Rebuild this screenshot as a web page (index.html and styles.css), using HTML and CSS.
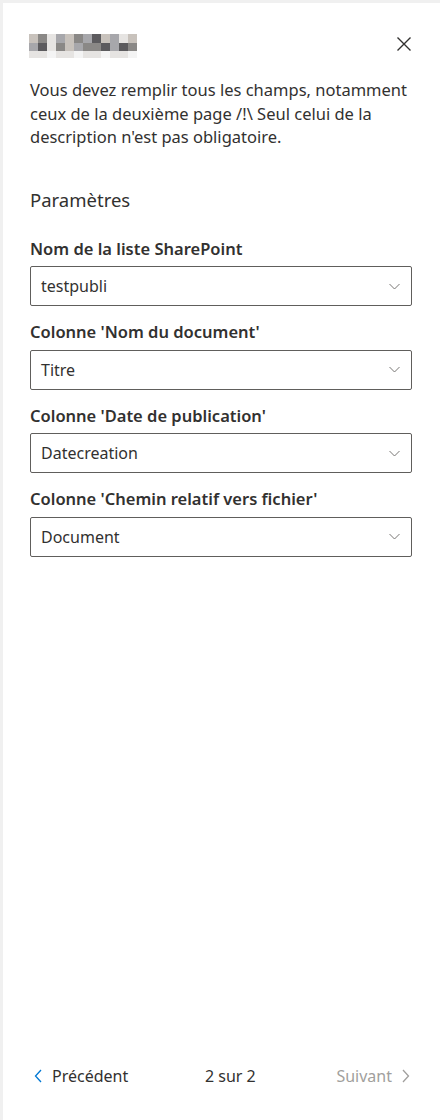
FILE: index.html
```html
<!DOCTYPE html>
<html lang="fr">
<head>
<meta charset="utf-8">
<link rel="stylesheet" href="styles.css">
</head>
<body>
<div class="panel">
  <div class="header">
    <div class="mosaic">
      <span class="c2"></span><span class="c4"></span><span class="c1"></span><span class="c3"></span><span class="c2"></span><span class="c4"></span><span class="c3"></span><span class="c5"></span><span class="c2"></span><span class="c3"></span><span class="c1"></span><span class="c2"></span>
      <span class="c3"></span><span class="c5"></span><span class="c1"></span><span class="c4"></span><span class="c2"></span><span class="c3"></span><span class="c4"></span><span class="c4"></span><span class="c5"></span><span class="c3"></span><span class="c5"></span><span class="c4"></span>
      <span class="c1"></span><span class="c1"></span><span class="c0"></span><span class="c1"></span><span class="c1"></span><span class="c0"></span><span class="c1"></span><span class="c1"></span><span class="c0"></span><span class="c1"></span><span class="c1"></span><span class="c0"></span>
    </div>
    <button class="close" aria-label="Fermer">
      <svg width="16" height="16" viewBox="0 0 16 16"><path d="M1.5 1.5 L14.5 14.5 M14.5 1.5 L1.5 14.5" stroke="#323130" stroke-width="1.4" fill="none"/></svg>
    </button>
  </div>
  <p class="desc">Vous devez remplir tous les champs, notamment ceux de la deuxième page /!\ Seul celui de la description n'est pas obligatoire.</p>
  <h2 class="section">Paramètres</h2>
  <div class="fields">
    <div class="field">
      <label class="label">Nom de la liste SharePoint</label>
      <div class="dropdown"><span>testpubli</span><svg class="chev" width="11" height="7" viewBox="0 0 11 7"><path d="M0.5 1 L5.5 6 L10.5 1" stroke="#797775" stroke-width="1" fill="none"/></svg></div>
    </div>
    <div class="field">
      <label class="label">Colonne 'Nom du document'</label>
      <div class="dropdown"><span>Titre</span><svg class="chev" width="11" height="7" viewBox="0 0 11 7"><path d="M0.5 1 L5.5 6 L10.5 1" stroke="#797775" stroke-width="1" fill="none"/></svg></div>
    </div>
    <div class="field">
      <label class="label">Colonne 'Date de publication'</label>
      <div class="dropdown"><span>Datecreation</span><svg class="chev" width="11" height="7" viewBox="0 0 11 7"><path d="M0.5 1 L5.5 6 L10.5 1" stroke="#797775" stroke-width="1" fill="none"/></svg></div>
    </div>
    <div class="field">
      <label class="label">Colonne 'Chemin relatif vers fichier'</label>
      <div class="dropdown"><span>Document</span><svg class="chev" width="11" height="7" viewBox="0 0 11 7"><path d="M0.5 1 L5.5 6 L10.5 1" stroke="#797775" stroke-width="1" fill="none"/></svg></div>
    </div>
  </div>
  <div class="spacer"></div>
  <div class="footer">
    <span class="nav prev"><svg width="8" height="14" viewBox="0 0 8 14"><path d="M7 1 L1.5 7 L7 13" stroke="#0078d4" stroke-width="1.3" fill="none"/></svg>Précédent</span>
    <span class="page">2 sur 2</span>
    <span class="nav next">Suivant<svg width="8" height="14" viewBox="0 0 8 14"><path d="M1 1 L6.5 7 L1 13" stroke="#a19f9d" stroke-width="1.3" fill="none"/></svg></span>
  </div>
</div>
</body>
</html>
```
FILE: styles.css
```css
* { box-sizing: border-box; }
html, body { margin: 0; padding: 0; }
body {
  background: #f0f0f0;
  font-family: "Noto Sans", "Open Sans", sans-serif;
  color: #323130;
  width: 440px;
  height: 1120px;
  overflow: hidden;
}
.panel {
  margin: 3px 0 0 3px;
  height: 1117px;
  background: #fff;
  padding: 0 28px 0 27px;
  display: flex;
  flex-direction: column;
}
.header {
  display: flex;
  align-items: center;
  justify-content: space-between;
  padding-top: 29px;
  height: 57px;
}
.mosaic {
  display: grid;
  grid-template-columns: repeat(12, 9px);
  grid-template-rows: 9px 8px 7px;
  margin-left: -1px;
}
.mosaic span { display: block; }
.c0 { background: #f4f4f4; }
.c1 { background: #e6e4e2; }
.c2 { background: #c8c2bc; }
.c3 { background: #a7a7ab; }
.c4 { background: #8a8886; }
.c5 { background: #5c5b5e; }
.close {
  border: 0;
  background: none;
  padding: 0;
  width: 16px;
  height: 16px;
  display: flex;
  margin-top: -4px;
}
.desc {
  margin: 18px 0 0 0;
  font-size: 16.5px;
  line-height: 23.5px;
  color: #323130;
}
.section {
  margin: 38px 0 0 0;
  font-size: 18.5px;
  font-weight: 400;
  line-height: 26px;
}
.fields {
  margin-top: 25px;
  display: flex;
  flex-direction: column;
  gap: 15px;
}
.field { display: flex; flex-direction: column; }
.label {
  font-size: 16.5px;
  font-weight: 600;
  line-height: 22px;
  padding-bottom: 6.5px;
}
.dropdown {
  height: 40px;
  border: 1px solid #605e5c;
  border-radius: 2px;
  display: flex;
  align-items: center;
  justify-content: space-between;
  padding: 0 11px 0 10px;
  font-size: 16px;
}
.spacer { flex: 1; }
.footer {
  display: flex;
  justify-content: space-between;
  align-items: center;
  height: 30px;
  margin-bottom: 29px;
  font-size: 16px;
}
.nav { display: flex; align-items: center; gap: 10px; }
.prev { padding-left: 4px; }
.page { margin-left: -4px; }
.next { color: #a19f9d; padding-right: 2px; }
```
